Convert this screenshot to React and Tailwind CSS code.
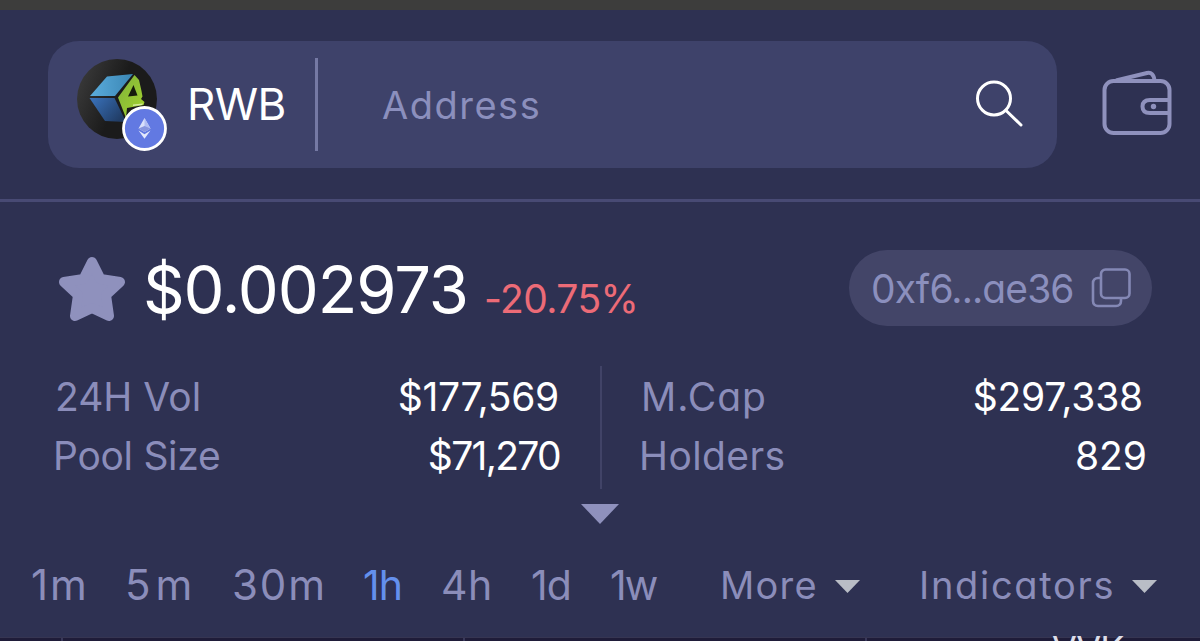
import React, { useState } from 'react';

const timeframes = [
  { id: '1m', style: 'ml-[31px] w-[94px] text-[42px] tracking-[2px]' },
  { id: '5m', style: 'w-[107px] text-[42px] tracking-[5px]' },
  { id: '30m', style: 'w-[131px] text-[42px] tracking-[1.9px]' },
  { id: '1h', style: 'w-[78px] tracking-[-1px]' },
  { id: '4h', style: 'w-[90px] tracking-[0.5px]' },
  { id: '1d', style: 'w-[79px] tracking-[-1px]' },
  { id: '1w', style: 'w-[110px] tracking-[-2px]' },
];

const TokenLogo = () => (
  <svg className="block h-[94px] w-[92px]" viewBox="0 0 92 94" fill="none">
    <defs>
      <linearGradient id="disc" x1="0" y1="0" x2="1" y2="0.4">
        <stop offset="0" stopColor="#3f3f3f" />
        <stop offset="0.6" stopColor="#1b1b1b" />
      </linearGradient>
      <linearGradient id="cubeTop" x1="0" y1="0" x2="1" y2="0">
        <stop offset="0" stopColor="#5bacdc" />
        <stop offset="1" stopColor="#3a86b4" />
      </linearGradient>
      <linearGradient id="cubeFront" x1="0" y1="0" x2="1" y2="0.6">
        <stop offset="0" stopColor="#3a73bd" />
        <stop offset="1" stopColor="#213d66" />
      </linearGradient>
      <linearGradient id="cubeSide" x1="0" y1="0" x2="1" y2="1">
        <stop offset="0" stopColor="#7fb23c" />
        <stop offset="1" stopColor="#a5d42d" />
      </linearGradient>
    </defs>
    <circle cx="40" cy="41" r="40" fill="url(#disc)" />
    <path d="M13 38 30 18.500 56 16 38 38Z" fill="url(#cubeTop)" />
    <path d="M12.500 40 37.500 40 49 64 28 63Z" fill="url(#cubeFront)" />
    <path d="M57.500 17 62 22 64.500 33 65.500 38.500 64 41 67.500 44 66.500 47 50 50 49 60 41 39.500Z" fill="url(#cubeSide)" />
    <path d="M56.500 27 60.500 37.500 51 38.500Z" fill="#161b0c" />
    <path d="m56 46.500 10-1-1 1.500-9 1Z" fill="#d5eb9c" />
    <circle cx="67.500" cy="70.500" r="21" fill="#6279e2" stroke="#fff" strokeWidth="2.800" />
    <path d="m67.500 60-6 10.500 6 3.500 6-3.500Z" fill="#d9e0fb" />
    <path d="m67.500 60 6 10.500-6 3.500Z" fill="#b2bef3" />
    <path d="m61.500 70.500 6-2.500 6 2.500-6 3.500Z" fill="#8795df" />
    <path d="m61.500 72.500 6 3.700 6-3.700-6 8.200Z" fill="#e4e9fc" />
  </svg>
);

const SearchIcon = () => (
  <svg className="block size-[50px]" viewBox="0 0 50 50" fill="none" stroke="#fff" strokeWidth="3" strokeLinecap="round">
    <circle cx="19" cy="19.500" r="16.500" />
    <path d="m31 31.500 15 14.500" />
  </svg>
);

const WalletIcon = () => (
  <svg className="block h-[66px] w-[70px]" viewBox="0 0 70 66" fill="none" stroke="#8f91bd" strokeWidth="4" strokeLinejoin="round">
    <rect x="2.500" y="11" width="65" height="52" rx="9" />
    <path d="m14 10.500 31-7.500c4-1 7 1.500 7.500 8" />
    <path d="M67 30H48c-4.500 0-7.500 2-7.500 6.500S43.500 43 48 43h19" />
    <circle cx="51.500" cy="36.500" r="2.700" fill="#8f91bd" stroke="none" />
  </svg>
);

const StarIcon = () => (
  <svg className="block h-[67px] w-[68px]" viewBox="0 0 68 67">
    <path
      d="M34 6 42.500 23 62 26 48 39 51 60 34 52 17 60 20 39 6 26 25.500 23Z"
      fill="#8f91bd"
      stroke="#8f91bd"
      strokeWidth="10"
      strokeLinejoin="round"
    />
  </svg>
);

const CopyIcon = () => (
  <svg className="block size-[40px]" viewBox="0 0 40 40" fill="none" stroke="#8488b5" strokeWidth="2.600">
    <rect x="10" y="1.500" width="28.500" height="28.500" rx="4.500" />
    <path d="M10 10H7c-3 0-5 2-5 5v18c0 3 2 5 5 5h18c3 0 5-2 5-5v-3" />
  </svg>
);

const Caret = ({ className }) => (
  <svg className={className} viewBox="0 0 38 20" preserveAspectRatio="none">
    <path d="M0 0h38L19 20Z" fill="currentColor" />
  </svg>
);

const Stat = ({ label, value, className = '', labelStyle = '', valueStyle = '' }) => (
  <div className={`flex h-[59px] items-center justify-between ${className}`}>
    <span className={`text-[#8b8dba] ${labelStyle}`}>{label}</span>
    <span className={`text-white ${valueStyle}`}>{value}</span>
  </div>
);

export default function App() {
  const [active, setActive] = useState('1h');

  return (
    <div className="flex h-[641px] w-[1200px] flex-col overflow-hidden whitespace-nowrap bg-[#2e3152] font-['Inter',sans-serif] font-normal leading-none [font-feature-settings:'cv11']">
      <div className="h-[10px] shrink-0 bg-[#3d3d3c]" />

      {/* Search header */}
      <header className="flex h-[192px] shrink-0 border-b-[3px] border-[#484a74] pt-[31px] pl-[48px]">
        <div className="flex h-[127px] w-[1009px] rounded-[31px] bg-[#3e426a]">
          <div className="ml-[29px] mt-[17px]">
            <TokenLogo />
          </div>
          <span className="ml-[18px] mt-[41px] w-[128px] text-[44px] tracking-[-0.6px] text-white">RWB</span>
          <div className="mt-[17px] h-[93px] w-[3px] bg-[#7579a4]" />
          <span className="ml-[64px] mt-[45px] w-[593px] text-[38px] tracking-[1.5px] text-[#8b8fbd]">Address</span>
          <div className="mt-[38px]">
            <SearchIcon />
          </div>
        </div>
        <div className="ml-[45px] mt-[29px]">
          <WalletIcon />
        </div>
      </header>

      {/* Price */}
      <section className="flex h-[164px] shrink-0 pl-[58px] pt-[48px]">
        <div className="mt-[6px]">
          <StarIcon />
        </div>
        <span className="ml-[17px] mt-[7px] w-[341px] text-[65px] tracking-[-1.1px] text-white">$0.002973</span>
        <span className="mt-[29px] w-[365px] text-[39px] tracking-[-0.6px] text-[#ec6b77]">-20.75%</span>
        <div className="flex h-[76px] w-[303px] items-center rounded-full bg-[#434568] pl-[22px]">
          <span className="w-[220px] text-[39px] tracking-[-0.9px] text-[#8b8fbd]">0xf6...ae36</span>
          <CopyIcon />
        </div>
      </section>

      {/* Stats */}
      <section className="flex h-[138px] shrink-0 text-[39px]">
        <div className="w-[600px] pt-px pl-[54px] pr-[38px]">
          <Stat label="24H Vol" value="$177,569" className="pl-px pr-[3px]" valueStyle="tracking-[-0.3px]" />
          <Stat label="Pool Size" value="$71,270" className="-ml-px" labelStyle="tracking-[-0.3px]" valueStyle="mr-[2px] tracking-[-1.7px]" />
        </div>
        <div className="h-[123px] w-[2px] bg-[#414367]" />
        <div className="w-[598px] pt-px pl-[37px] pr-[53px]">
          <Stat label="M.Cap" value="$297,338" className="pl-[2px] pr-[4px]" labelStyle="tracking-[1px]" valueStyle="tracking-[-0.2px]" />
          <Stat label="Holders" value="829" labelStyle="tracking-[0.4px]" />
        </div>
      </section>

      <div className="flex h-[34px] shrink-0 justify-center">
        <Caret className="h-[20px] w-[38px] text-[#8f91bd]" />
      </div>

      {/* Chart toolbar */}
      <nav className="flex h-[99px] shrink-0 items-center pb-[5px] text-[41px] text-[#8b8dba]">
        {timeframes.map((item) => (
          <button
            key={item.id}
            onClick={() => setActive(item.id)}
            className={`text-left ${item.style} ${active === item.id ? 'text-[#6490ed]' : ''}`}
          >
            {item.id}
          </button>
        ))}
        <button className="flex w-[199px] items-center text-[38px] tracking-[1.2px]">
          <span className="w-[115px] text-left">More</span>
          <Caret className="mt-[3px] h-[13px] w-[25px] text-[#b9bdc6]" />
        </button>
        <button className="flex items-center text-[38px] tracking-[1.7px]">
          <span className="w-[213px] text-left">Indicators</span>
          <Caret className="mt-[3px] h-[13px] w-[25px] text-[#b9bdc6]" />
        </button>
      </nav>

      {/* Top edge of the chart */}
      <div className="flex h-[4px] shrink-0 items-start border-t border-[#363552] bg-[#1f1c39]">
        <div className="ml-[61px] h-[4px] w-[2px] bg-[#39385a]" />
        <div className="ml-[400px] h-[4px] w-[2px] bg-[#39385a]" />
        <div className="ml-[400px] h-[4px] w-[2px] bg-[#39385a]" />
        <span className="-mt-[7px] ml-[185px] text-[36px] tracking-[-1px] text-[#dcdde9]">VVK</span>
      </div>
    </div>
  );
}
